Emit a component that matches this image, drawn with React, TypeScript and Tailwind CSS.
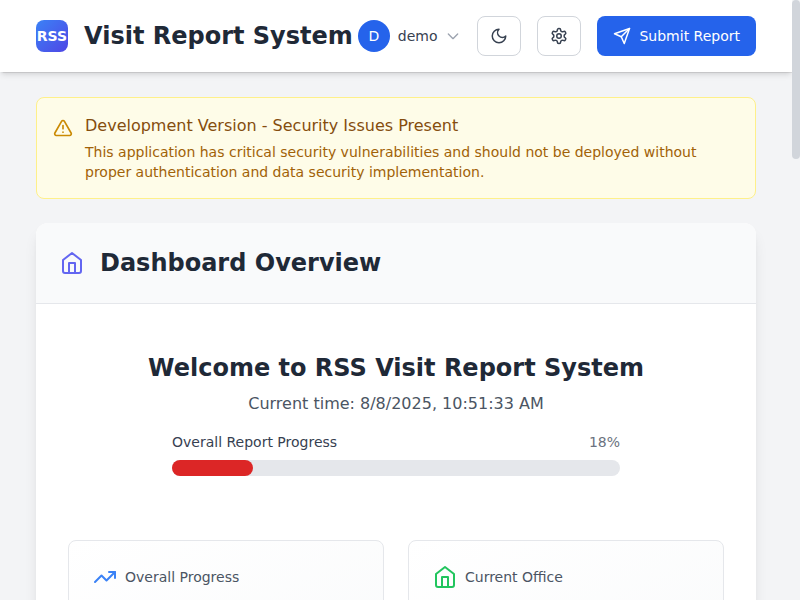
import React from "react";

function Icon({ className, strokeWidth = 2, children }: { className: string; strokeWidth?: number; children: React.ReactNode }) {
  return (
    <svg viewBox="0 0 24 24" fill="none" stroke="currentColor" strokeWidth={strokeWidth} strokeLinecap="round" strokeLinejoin="round" className={className}>
      {children}
    </svg>
  );
}

function HomeIcon({ className }: { className: string }) {
  return (
    <Icon className={className}>
      <path d="m3 9 9-7 9 7v11a2 2 0 0 1-2 2H5a2 2 0 0 1-2-2z" />
      <polyline points="9 22 9 12 15 12 15 22" />
    </Icon>
  );
}

function Header() {
  return (
    <header className="relative z-10 mr-2 h-[72px] bg-white px-9 opacity-[0.999] shadow-[0_4px_6px_-1px_rgba(0,0,0,0.1),0_2px_4px_-2px_rgba(0,0,0,0.1),0_1px_1px_-0.5px_rgba(0,0,0,0.08)]">
      <div className="flex h-full items-center justify-between">
        <div className="flex items-center gap-4">
          <div className="flex size-8 items-center justify-center rounded-lg bg-linear-to-br/srgb from-[#3b82f6] to-[#4f46e5] text-sm font-bold text-white">RSS</div>
          <h1 className="whitespace-nowrap text-2xl font-bold text-[#1f2937]">Visit Report System</h1>
        </div>
        <div className="flex items-center gap-4">
          <div className="flex items-center gap-2">
            <div className="flex size-8 items-center justify-center rounded-full bg-[#2563eb] text-sm text-white">D</div>
            <span className="text-sm text-[#374151]">demo</span>
            <Icon className="size-4 text-[#9ca3af]" strokeWidth={2}>
              <path d="m19 9-7 7-7-7" />
            </Icon>
          </div>
          <button className="flex h-10 w-11 items-center justify-center rounded-lg border border-[#d1d5db] text-[#374151]">
            <Icon className="size-[18px]">
              <path d="M12 3a6 6 0 0 0 9 9 9 9 0 1 1-9-9Z" />
            </Icon>
          </button>
          <button className="flex h-10 w-11 items-center justify-center rounded-lg border border-[#d1d5db] text-[#374151]">
            <Icon className="size-[18px]">
              <path d="M12.22 2h-.44a2 2 0 0 0-2 2v.18a2 2 0 0 1-1 1.73l-.43.25a2 2 0 0 1-2 0l-.15-.08a2 2 0 0 0-2.73.73l-.22.38a2 2 0 0 0 .73 2.73l.15.1a2 2 0 0 1 1 1.72v.51a2 2 0 0 1-1 1.74l-.15.09a2 2 0 0 0-.73 2.73l.22.38a2 2 0 0 0 2.73.73l.15-.08a2 2 0 0 1 2 0l.43.25a2 2 0 0 1 1 1.73V20a2 2 0 0 0 2 2h.44a2 2 0 0 0 2-2v-.18a2 2 0 0 1 1-1.73l.43-.25a2 2 0 0 1 2 0l.15.08a2 2 0 0 0 2.73-.73l.22-.39a2 2 0 0 0-.73-2.73l-.15-.08a2 2 0 0 1-1-1.74v-.5a2 2 0 0 1 1-1.74l.15-.09a2 2 0 0 0 .73-2.73l-.22-.38a2 2 0 0 0-2.73-.73l-.15.08a2 2 0 0 1-2 0l-.43-.25a2 2 0 0 1-1-1.73V4a2 2 0 0 0-2-2z" />
              <circle cx="12" cy="12" r="3" />
            </Icon>
          </button>
          <button className="flex h-10 items-center gap-2 whitespace-nowrap rounded-lg bg-[#2563eb] px-4 text-sm text-white">
            <Icon className="size-[18px]">
              <path d="m22 2-7 20-4-9-9-4Z" />
              <path d="M22 2 11 13" />
            </Icon>
            Submit Report
          </button>
        </div>
      </div>
    </header>
  );
}

export default function App() {
  return (
    <div className="relative h-[600px] w-[800px] overflow-hidden bg-[#f3f4f6] font-['DejaVu_Sans',sans-serif]">
      <Header />
      <main className="pl-9 pr-11 pt-[25px]">
        <div className="flex h-[102px] gap-3 rounded-lg border border-[#fef08a] bg-[#fefce8] p-4">
          <Icon className="mt-1 size-5 shrink-0 text-[#ca8a04]">
            <path d="m21.73 18-8-14a2 2 0 0 0-3.48 0l-8 14A2 2 0 0 0 4 21h16a2 2 0 0 0 1.73-3Z" />
            <path d="M12 9v4" />
            <path d="M12 17h.01" />
          </Icon>
          <div>
            <h3 className="text-base text-[#854d0e]">Development Version - Security Issues Present</h3>
            <p className="mt-1 text-sm text-[#a16207]">
              This application has critical security vulnerabilities and should not be deployed without proper authentication and data security implementation.
            </p>
          </div>
        </div>
        <section className="mt-6 h-[500px] overflow-hidden rounded-xl bg-white shadow-lg">
          <div className="flex h-[81px] items-center gap-4 border-b border-[#e5e7eb] bg-[#f9fafb] px-6">
            <HomeIcon className="size-6 text-[#6366f1]" />
            <h2 className="text-2xl font-bold text-[#1f2937]">Dashboard Overview</h2>
          </div>
          <div className="p-8">
            <div className="px-[104px] pt-4 text-center">
              <h2 className="-mx-10 whitespace-nowrap text-2xl font-bold text-[#1f2937]">Welcome to RSS Visit Report System</h2>
              <p className="mt-2 text-base text-[#4b5563]">Current time: 8/8/2025, 10:51:33 AM</p>
              <div className="mt-4 flex justify-between text-sm">
                <span className="text-[#374151]">Overall Report Progress</span>
                <span className="text-[#6b7280]">18%</span>
              </div>
              <div className="mt-2 h-4 rounded-full bg-[#e5e7eb]">
                <div className="h-4 w-[18%] rounded-full bg-[#dc2626]" />
              </div>
            </div>
            <div className="mt-16 grid grid-cols-2 gap-6">
              <div className="h-36 rounded-lg border border-[#e5e7eb] bg-linear-to-br/srgb from-white to-[#f9fafb] p-6">
                <div className="flex items-center gap-2">
                  <Icon className="size-6 text-[#3b82f6]">
                    <polyline points="22 7 13.5 15.5 8.5 10.5 2 17" />
                    <polyline points="16 7 22 7 22 13" />
                  </Icon>
                  <span className="text-sm text-[#4b5563]">Overall Progress</span>
                </div>
              </div>
              <div className="h-36 rounded-lg border border-[#e5e7eb] bg-linear-to-br/srgb from-white to-[#f9fafb] p-6">
                <div className="flex items-center gap-2">
                  <HomeIcon className="size-6 text-[#22c55e]" />
                  <span className="text-sm text-[#4b5563]">Current Office</span>
                </div>
              </div>
            </div>
          </div>
        </section>
      </main>
      <div className="absolute right-0 top-0 z-20 h-[159px] w-2 rounded bg-[#d1d5db]" />
    </div>
  );
}
